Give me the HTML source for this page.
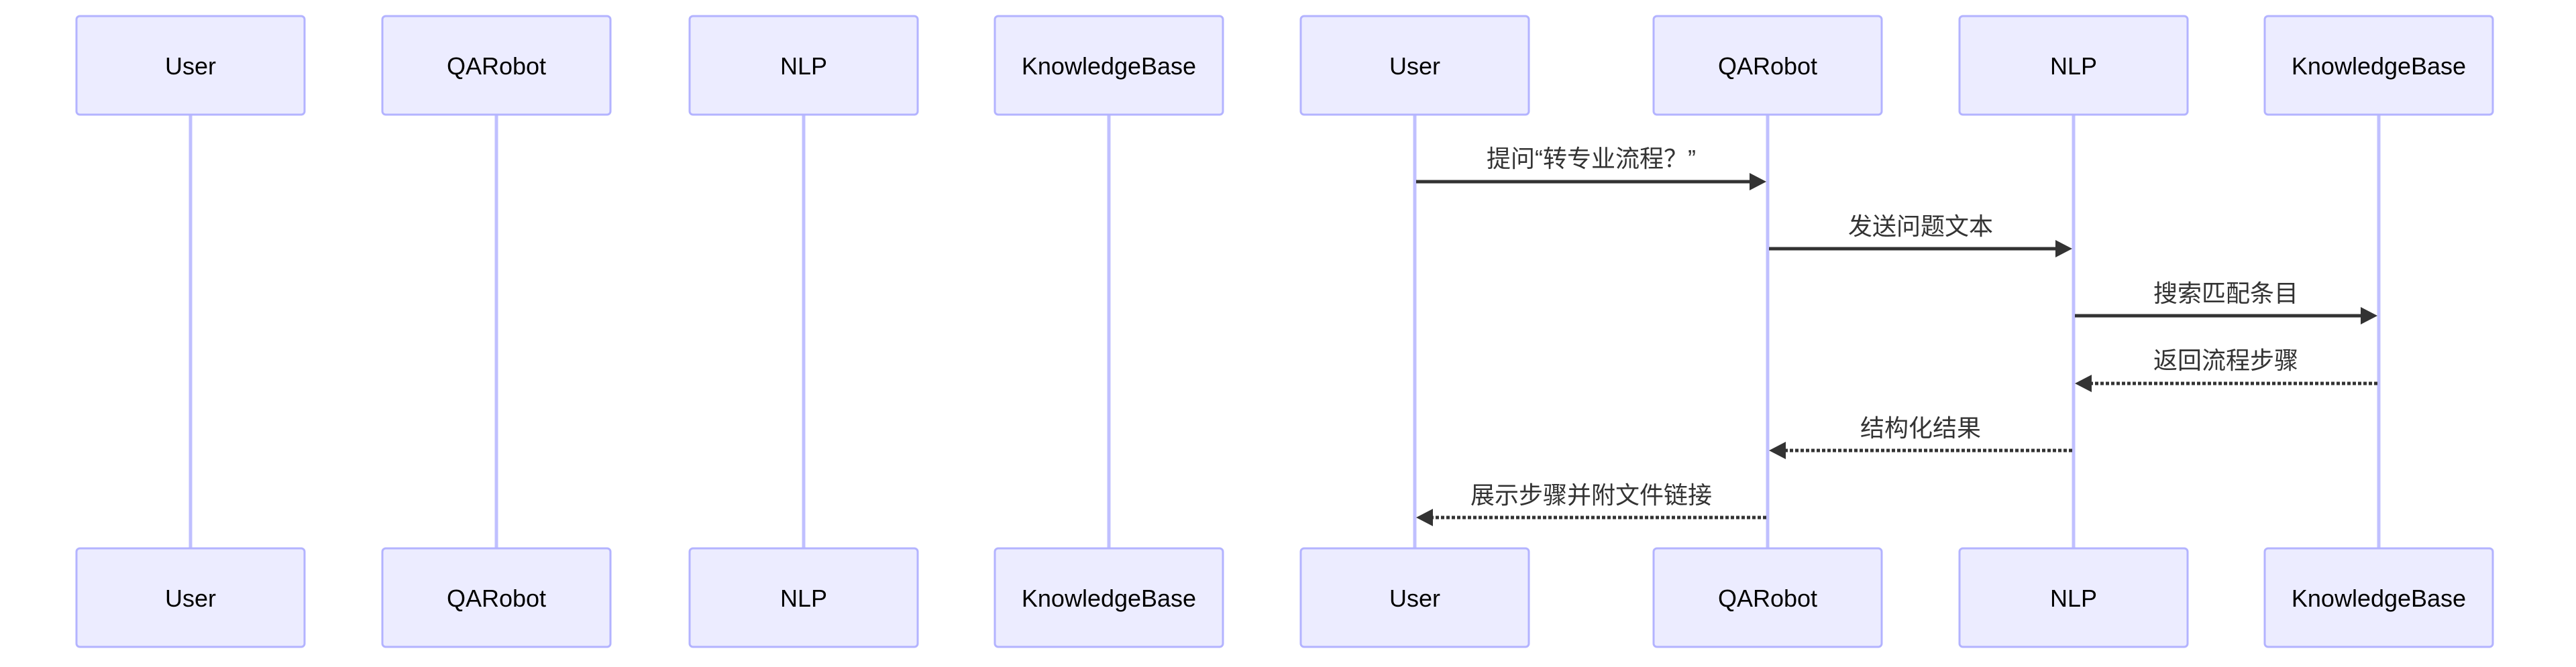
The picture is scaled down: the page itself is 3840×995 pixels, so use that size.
<!DOCTYPE html>
<html><head><meta charset="utf-8"><style>
html,body{margin:0;padding:0;background:#fff;width:3840px;height:995px;overflow:hidden}
text{font-family:"Liberation Sans","Noto Sans CJK SC",sans-serif;fill:#333}
.a{fill:#000;font-size:36px}
</style></head><body>
<svg width="3840" height="995" viewBox="0 0 3840 995" xmlns="http://www.w3.org/2000/svg">
<g stroke="#c0c0ff" stroke-width="5">
<line x1="284" y1="171" x2="284" y2="818"/><line x1="740" y1="171" x2="740" y2="818"/>
<line x1="1198" y1="171" x2="1198" y2="818"/><line x1="1653" y1="171" x2="1653" y2="818"/>
<line x1="2109" y1="171" x2="2109" y2="818"/><line x1="2635" y1="171" x2="2635" y2="818"/>
<line x1="3091" y1="171" x2="3091" y2="818"/><line x1="3546" y1="171" x2="3546" y2="818"/>
</g>
<g fill="#ececff" stroke="#b3b3ff" stroke-width="3">
<rect x="114" y="24" width="340" height="147" rx="5"/><rect x="570" y="24" width="340" height="147" rx="5"/>
<rect x="1028" y="24" width="340" height="147" rx="5"/><rect x="1483" y="24" width="340" height="147" rx="5"/>
<rect x="1939" y="24" width="340" height="147" rx="5"/><rect x="2465" y="24" width="340" height="147" rx="5"/>
<rect x="2921" y="24" width="340" height="147" rx="5"/><rect x="3376" y="24" width="340" height="147" rx="5"/>
<rect x="114" y="818" width="340" height="147" rx="5"/><rect x="570" y="818" width="340" height="147" rx="5"/>
<rect x="1028" y="818" width="340" height="147" rx="5"/><rect x="1483" y="818" width="340" height="147" rx="5"/>
<rect x="1939" y="818" width="340" height="147" rx="5"/><rect x="2465" y="818" width="340" height="147" rx="5"/>
<rect x="2921" y="818" width="340" height="147" rx="5"/><rect x="3376" y="818" width="340" height="147" rx="5"/>
</g>
<g class="a" text-anchor="middle">
<text class="a" x="284" y="111">User</text><text class="a" x="740" y="111">QARobot</text>
<text class="a" x="1198" y="111">NLP</text><text class="a" x="1653" y="111">KnowledgeBase</text>
<text class="a" x="2109" y="111">User</text><text class="a" x="2635" y="111">QARobot</text>
<text class="a" x="3091" y="111">NLP</text><text class="a" x="3546" y="111">KnowledgeBase</text>
<text class="a" x="284" y="905">User</text><text class="a" x="740" y="905">QARobot</text>
<text class="a" x="1198" y="905">NLP</text><text class="a" x="1653" y="905">KnowledgeBase</text>
<text class="a" x="2109" y="905">User</text><text class="a" x="2635" y="905">QARobot</text>
<text class="a" x="3091" y="905">NLP</text><text class="a" x="3546" y="905">KnowledgeBase</text>
</g>
<g stroke="#333" stroke-width="5">
<line x1="2111" y1="271" x2="2610" y2="271"/>
<line x1="2637" y1="371" x2="3066" y2="371"/>
<line x1="3093" y1="471" x2="3522" y2="471"/>
<g stroke-dasharray="5,3">
<line x1="3544" y1="572" x2="3116" y2="572"/>
<line x1="3089" y1="672" x2="2660" y2="672"/>
<line x1="2633" y1="772" x2="2134" y2="772"/>
</g></g>
<g fill="#333">
<path d="M2633 271 L2608 258 L2608 284 Z"/>
<path d="M3089 371 L3064 358 L3064 384 Z"/>
<path d="M3544 471 L3519 458 L3519 484 Z"/>
<path d="M3093 572 L3118 559 L3118 585 Z"/>
<path d="M2637 672 L2662 659 L2662 685 Z"/>
<path d="M2111 772 L2136 759 L2136 785 Z"/>
</g>
<g text-anchor="middle" font-size="36">
<text x="2372" y="249">提问“转专业流程？”</text>
<text x="2863" y="350">发送问题文本</text>
<text x="3318" y="450">搜索匹配条目</text>
<text x="3318" y="550">返回流程步骤</text>
<text x="2863" y="651">结构化结果</text>
<text x="2372" y="751">展示步骤并附文件链接</text>
</g>
</svg>
</body></html>
